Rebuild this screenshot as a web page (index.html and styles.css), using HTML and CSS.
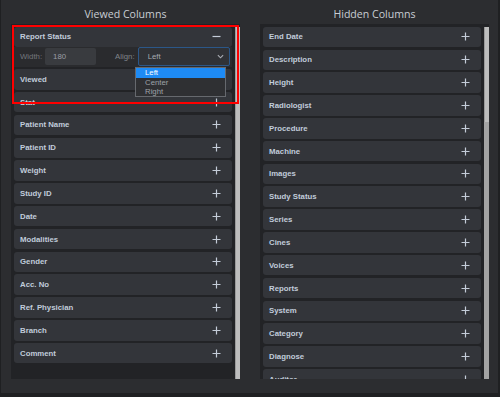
FILE: index.html
```html
<!DOCTYPE html>
<html>
<head>
<meta charset="utf-8">
<link rel="stylesheet" href="styles.css">
</head>
<body>
<div class="app">
  <section class="col">
    <h2 class="title">Viewed Columns</h2>
    <div class="box">
      <div class="list">
        <div class="item-open">
          <div class="row head"><span>Report Status</span>
            <svg class="ico" viewBox="0 0 9 9"><path d="M0.5 4.5H8.5"/></svg>
          </div>
          <div class="settings">
            <span class="lbl">Width:</span>
            <span class="input">180</span>
            <span class="lbl align">Align:</span>
            <span class="select">Left
              <svg class="chev" viewBox="0 0 8 5"><path d="M1 1L4 4L7 1"/></svg>
            </span>
            <div class="menu">
              <div class="opt sel">Left</div>
              <div class="opt">Center</div>
              <div class="opt">Right</div>
            </div>
          </div>
        </div>
        <div class="row"><span>Viewed</span><svg class="ico" viewBox="0 0 9 9"><path d="M0.5 4.5H8.5M4.5 0.5V8.5"/></svg></div>
        <div class="row"><span>Stat</span><svg class="ico" viewBox="0 0 9 9"><path d="M0.5 4.5H8.5M4.5 0.5V8.5"/></svg></div>
        <div class="row"><span>Patient Name</span><svg class="ico" viewBox="0 0 9 9"><path d="M0.5 4.5H8.5M4.5 0.5V8.5"/></svg></div>
        <div class="row"><span>Patient ID</span><svg class="ico" viewBox="0 0 9 9"><path d="M0.5 4.5H8.5M4.5 0.5V8.5"/></svg></div>
        <div class="row"><span>Weight</span><svg class="ico" viewBox="0 0 9 9"><path d="M0.5 4.5H8.5M4.5 0.5V8.5"/></svg></div>
        <div class="row"><span>Study ID</span><svg class="ico" viewBox="0 0 9 9"><path d="M0.5 4.5H8.5M4.5 0.5V8.5"/></svg></div>
        <div class="row"><span>Date</span><svg class="ico" viewBox="0 0 9 9"><path d="M0.5 4.5H8.5M4.5 0.5V8.5"/></svg></div>
        <div class="row"><span>Modalities</span><svg class="ico" viewBox="0 0 9 9"><path d="M0.5 4.5H8.5M4.5 0.5V8.5"/></svg></div>
        <div class="row"><span>Gender</span><svg class="ico" viewBox="0 0 9 9"><path d="M0.5 4.5H8.5M4.5 0.5V8.5"/></svg></div>
        <div class="row"><span>Acc. No</span><svg class="ico" viewBox="0 0 9 9"><path d="M0.5 4.5H8.5M4.5 0.5V8.5"/></svg></div>
        <div class="row"><span>Ref. Physician</span><svg class="ico" viewBox="0 0 9 9"><path d="M0.5 4.5H8.5M4.5 0.5V8.5"/></svg></div>
        <div class="row"><span>Branch</span><svg class="ico" viewBox="0 0 9 9"><path d="M0.5 4.5H8.5M4.5 0.5V8.5"/></svg></div>
        <div class="row"><span>Comment</span><svg class="ico" viewBox="0 0 9 9"><path d="M0.5 4.5H8.5M4.5 0.5V8.5"/></svg></div>
      </div>
      <div class="scroll"><div class="thumb full"></div></div>
    </div>
    <div class="highlight"></div>
  </section>
  <section class="col">
    <h2 class="title">Hidden Columns</h2>
    <div class="box">
      <div class="list">
        <div class="row"><span>End Date</span><svg class="ico" viewBox="0 0 9 9"><path d="M0.5 4.5H8.5M4.5 0.5V8.5"/></svg></div>
        <div class="row"><span>Description</span><svg class="ico" viewBox="0 0 9 9"><path d="M0.5 4.5H8.5M4.5 0.5V8.5"/></svg></div>
        <div class="row"><span>Height</span><svg class="ico" viewBox="0 0 9 9"><path d="M0.5 4.5H8.5M4.5 0.5V8.5"/></svg></div>
        <div class="row"><span>Radiologist</span><svg class="ico" viewBox="0 0 9 9"><path d="M0.5 4.5H8.5M4.5 0.5V8.5"/></svg></div>
        <div class="row"><span>Procedure</span><svg class="ico" viewBox="0 0 9 9"><path d="M0.5 4.5H8.5M4.5 0.5V8.5"/></svg></div>
        <div class="row"><span>Machine</span><svg class="ico" viewBox="0 0 9 9"><path d="M0.5 4.5H8.5M4.5 0.5V8.5"/></svg></div>
        <div class="row"><span>Images</span><svg class="ico" viewBox="0 0 9 9"><path d="M0.5 4.5H8.5M4.5 0.5V8.5"/></svg></div>
        <div class="row"><span>Study Status</span><svg class="ico" viewBox="0 0 9 9"><path d="M0.5 4.5H8.5M4.5 0.5V8.5"/></svg></div>
        <div class="row"><span>Series</span><svg class="ico" viewBox="0 0 9 9"><path d="M0.5 4.5H8.5M4.5 0.5V8.5"/></svg></div>
        <div class="row"><span>Cines</span><svg class="ico" viewBox="0 0 9 9"><path d="M0.5 4.5H8.5M4.5 0.5V8.5"/></svg></div>
        <div class="row"><span>Voices</span><svg class="ico" viewBox="0 0 9 9"><path d="M0.5 4.5H8.5M4.5 0.5V8.5"/></svg></div>
        <div class="row"><span>Reports</span><svg class="ico" viewBox="0 0 9 9"><path d="M0.5 4.5H8.5M4.5 0.5V8.5"/></svg></div>
        <div class="row"><span>System</span><svg class="ico" viewBox="0 0 9 9"><path d="M0.5 4.5H8.5M4.5 0.5V8.5"/></svg></div>
        <div class="row"><span>Category</span><svg class="ico" viewBox="0 0 9 9"><path d="M0.5 4.5H8.5M4.5 0.5V8.5"/></svg></div>
        <div class="row"><span>Diagnose</span><svg class="ico" viewBox="0 0 9 9"><path d="M0.5 4.5H8.5M4.5 0.5V8.5"/></svg></div>
        <div class="row"><span>Auditor</span><svg class="ico" viewBox="0 0 9 9"><path d="M0.5 4.5H8.5M4.5 0.5V8.5"/></svg></div>
      </div>
      <div class="scroll track"><div class="thumb"></div></div>
    </div>
  </section>
</div>
</body>
</html>
```
FILE: styles.css
```css
* { box-sizing: border-box; }
html, body { margin: 0; padding: 0; }
body {
  background: #1f2022;
  width: 500px;
  height: 397px;
  overflow: hidden;
  font-family: "Liberation Sans", Arial, sans-serif;
}
.app {
  margin-left: 1px;
  width: 497px;
  height: 393px;
  background: #2c2d30;
  display: grid;
  grid-template-columns: 229px 229px;
  column-gap: 20px;
  padding-left: 10px;
}
.col {
  position: relative;
  display: flex;
  flex-direction: column;
}
.title {
  margin: 0;
  height: 24px;
  padding-top: 7px;
  line-height: 15px;
  font-family: "Open Sans", sans-serif;
  font-weight: 400;
  font-size: 10.6px;
  color: #c9cdd4;
  text-align: center;
}
.box {
  height: 355px;
  background: #222326;
  display: flex;
  overflow: hidden;
}
.list {
  width: 224px;
  padding: 2.7px 3px 0 3px;
  display: flex;
  flex-direction: column;
  gap: 2.33px;
  overflow: hidden;
}
.row {
  flex: none;
  height: 20.5px;
  background: #33353a;
  border-radius: 3px;
  display: flex;
  align-items: center;
  justify-content: space-between;
  padding: 0 11.5px 0 6px;
  font-weight: 700;
  font-size: 7.8px;
  color: #c1ccdb;
}
.ico {
  width: 9px;
  height: 9px;
  fill: none;
  stroke: #c4ccd8;
  stroke-width: 1.2;
}
.item-open { flex: none; }
.settings {
  position: relative;
  height: 19.5px;
  display: flex;
  align-items: center;
  padding-left: 6px;
  font-size: 7.8px;
  background: #2a2b2e;
}
.lbl { color: #74787e; }
.input {
  margin-left: 3px;
  width: 51px;
  height: 17px;
  background: #393b3f;
  border-radius: 2px;
  color: #9a9ea5;
  padding-left: 8px;
  line-height: 17px;
}
.align { margin-left: 19px; color: #80848a; }
.select {
  margin-left: 3px;
  width: 92px;
  height: 19px;
  border: 1px solid #2b5788;
  border-radius: 2px;
  background: #303236;
  color: #a6aab0;
  padding-left: 9px;
  display: flex;
  align-items: center;
  justify-content: space-between;
  padding-right: 5px;
}
.chev {
  width: 7px;
  height: 5px;
  fill: none;
  stroke: #a9adb3;
  stroke-width: 1.3;
}
.menu {
  position: absolute;
  left: 121px;
  top: 20px;
  width: 91px;
  height: 30px;
  background: #2f3033;
  border: 1px solid #66696e;
  font-size: 7.8px;
  z-index: 2;
}
.opt {
  height: 9.5px;
  line-height: 9.5px;
  padding-left: 9px;
  color: #9ea2a8;
}
.opt.sel {
  background: #1e8bf5;
  color: #ffffff;
}
.scroll {
  width: 5px;
  padding-top: 2.7px;
  display: flex;
  flex-direction: column;
}
.scroll.track {
  background: linear-gradient(#222326 2.7px, #a3a3a3 2.7px);
}
.thumb {
  height: 95px;
  background: #bdbdbd;
  border-left: 1px solid #9a9a9a;
}
.thumb.full { flex: 1; }
.highlight {
  position: absolute;
  left: 1.3px;
  top: 25.3px;
  width: 227px;
  height: 79px;
  border: 2px solid #ff0000;
  pointer-events: none;
  z-index: 3;
}
```
